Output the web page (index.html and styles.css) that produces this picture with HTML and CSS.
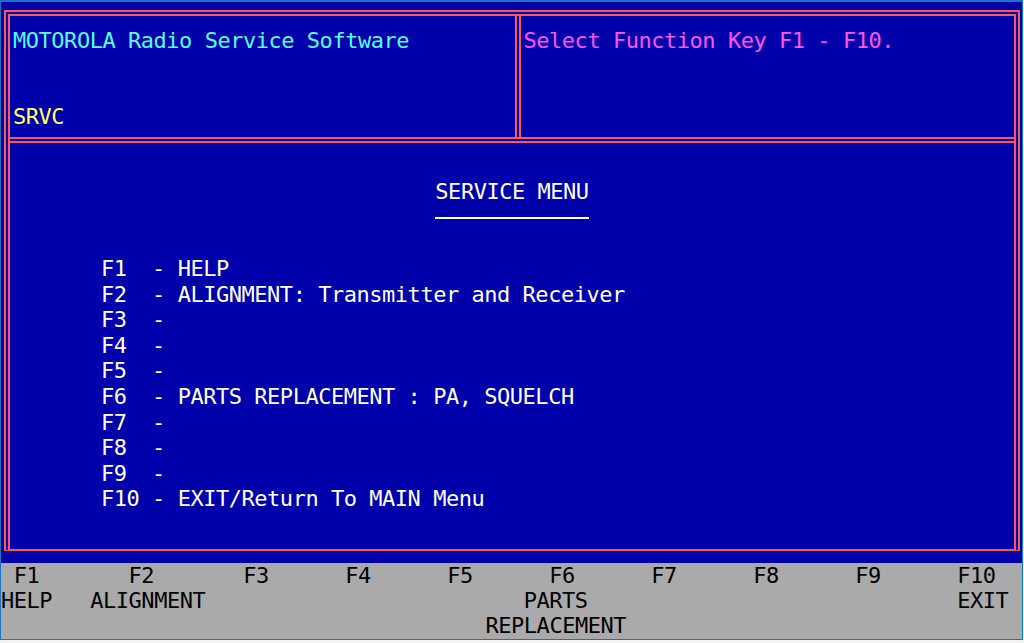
FILE: index.html
```html
<!DOCTYPE html>
<html lang="en">
<head>
  <meta charset="UTF-8" />
  <meta name="viewport" content="width=device-width, initial-scale=1" />
  <title>MOTOROLA Radio Service Software - Service Menu</title>
  <link rel="stylesheet" href="styles.css">
</head>
<body>

  <div class="console">
    <main class="desk">
      <div class="frame">

        <!-- Status strip: program name + prompt -->
        <div class="status">
          <div class="pane pane-id">
            <p class="txt-cyan">MOTOROLA Radio Service Software</p>
            <p class="txt-yellow mode">SRVC</p>
          </div>
          <div class="pane pane-prompt">
            <p class="txt-magenta">Select Function Key F1 - F10.</p>
          </div>
        </div>

        <!-- Menu body -->
        <section class="menu">
          <h1 class="menu-title">SERVICE MENU</h1>
          <div class="menu-rule"></div>
          <ul class="menu-list">
            <li>F1  - HELP</li>
            <li>F2  - ALIGNMENT: Transmitter and Receiver</li>
            <li>F3  -</li>
            <li>F4  -</li>
            <li>F5  -</li>
            <li>F6  - PARTS REPLACEMENT : PA, SQUELCH</li>
            <li>F7  -</li>
            <li>F8  -</li>
            <li>F9  -</li>
            <li>F10 - EXIT/Return To MAIN Menu</li>
          </ul>
        </section>

      </div>
    </main>

    <!-- Function key legend -->
    <footer class="keybar">
      <span class="key k1">F1</span>
      <span class="key k2">F2</span>
      <span class="key k3">F3</span>
      <span class="key k4">F4</span>
      <span class="key k5">F5</span>
      <span class="key k6">F6</span>
      <span class="key k7">F7</span>
      <span class="key k8">F8</span>
      <span class="key k9">F9</span>
      <span class="key k10">F10</span>
      <span class="cap cap-help">HELP</span>
      <span class="cap cap-align">ALIGNMENT</span>
      <span class="cap cap-parts">PARTS</span>
      <span class="cap cap-repl">REPLACEMENT</span>
      <span class="cap cap-exit">EXIT</span>
    </footer>
  </div>

</body>
</html>
```

FILE: styles.css
```css
/* Reset */
* {
  box-sizing: border-box;
  margin: 0;
  padding: 0;
}
body {
  background-color: #f3f3f3;
  font-family: "DejaVu Sans Mono", "Liberation Mono", monospace;
  font-size: 22px;
  letter-spacing: -0.47px;
  line-height: 25.6px;
}

/* Console window: 80x25 text screen */
.console {
  width: 1023px;
  height: 640px;
  border: 1px solid #1a74c4;
  border-top-width: 2px;
  display: flex;
  flex-direction: column;
  background-color: #0000aa;
}
.desk {
  height: 561px;
  padding: 8px 0 0 3px;
  background-color: #0000aa;
}

/* Double-line box */
.frame {
  width: 1016px;
  height: 541px;
  border: 6px double #ff5555;
  border-bottom: 2px solid #ff5555;
  display: flex;
  flex-direction: column;
}
.status {
  display: flex;
  height: 127px;
  border-bottom: 6px double #ff5555;
}
.pane {
  padding: 11.6px 0 0 3px;
}
.pane p {
  white-space: pre;
}
.pane-id {
  width: 511px;
  border-right: 6px double #ff5555;
}
.pane-prompt {
  flex: 1;
  padding-left: 2.5px;
}
.mode {
  margin-top: 51.2px;
}

/* Text colours */
.txt-cyan {
  color: #55ffff;
}
.txt-yellow {
  color: #ffff55;
}
.txt-magenta {
  color: #ff55ff;
}

/* Menu */
.menu {
  flex: 1;
  padding-top: 36.2px;
  color: #fff;
}
.menu-title {
  font: inherit;
  text-align: center;
}
.menu-rule {
  width: 154px;
  height: 2px;
  margin: 12.4px auto 11.2px;
  background-color: #fff;
}
.menu-list {
  list-style: none;
  padding: 25.6px 0 0 91px;
}
.menu-list li {
  white-space: pre;
}

/* Function key bar */
.keybar {
  flex: 1;
  background-color: #aaaaaa;
  color: #000;
  display: grid;
  grid-template-columns: repeat(80, 12.76px);
  grid-template-rows: repeat(3, 25.2px);
  line-height: 25.2px;
}
.keybar span {
  white-space: pre;
}
.key {
  grid-row: 1;
}
.k1 { grid-column-start: 2; }
.k2 { grid-column-start: 11; }
.k3 { grid-column-start: 20; }
.k4 { grid-column-start: 28; }
.k5 { grid-column-start: 36; }
.k6 { grid-column-start: 44; }
.k7 { grid-column-start: 52; }
.k8 { grid-column-start: 60; }
.k9 { grid-column-start: 68; }
.k10 { grid-column-start: 76; }

.cap-help { grid-row: 2; grid-column-start: 1; }
.cap-align { grid-row: 2; grid-column-start: 8; }
.cap-parts { grid-row: 2; grid-column-start: 42; }
.cap-repl { grid-row: 3; grid-column-start: 39; }
.cap-exit { grid-row: 2; grid-column-start: 76; }
```
